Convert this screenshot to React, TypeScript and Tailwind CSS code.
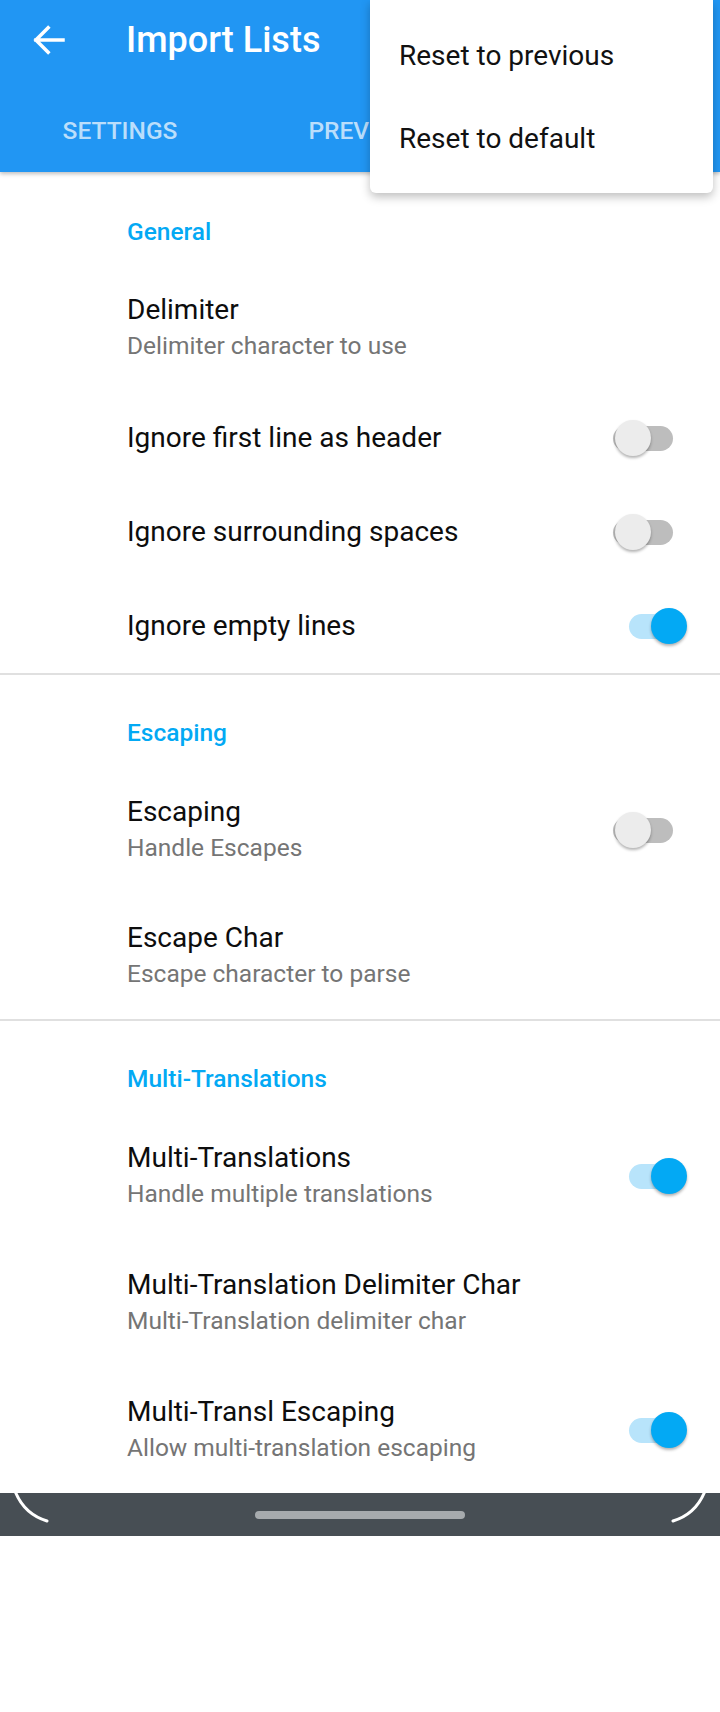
import React from 'react';

interface Pref {
  title: string;
  summary?: string;
  toggle?: boolean;
  checked?: boolean;
  height: string;
}

interface Section {
  name: string;
  first?: boolean;
  items: Pref[];
}

const sections: Section[] = [
  {
    name: 'General',
    first: true,
    items: [
      { title: 'Delimiter', summary: 'Delimiter character to use', height: 'h-[126px]' },
      { title: 'Ignore first line as header', toggle: true, checked: false, height: 'h-[94px]' },
      { title: 'Ignore surrounding spaces', toggle: true, checked: false, height: 'h-[94px]' },
      { title: 'Ignore empty lines', toggle: true, checked: true, height: 'h-[94px]' },
    ],
  },
  {
    name: 'Escaping',
    items: [
      { title: 'Escaping', summary: 'Handle Escapes', toggle: true, checked: false, height: 'h-[127px]' },
      { title: 'Escape Char', summary: 'Escape character to parse', height: 'h-[126px]' },
    ],
  },
  {
    name: 'Multi-Translations',
    items: [
      { title: 'Multi-Translations', summary: 'Handle multiple translations', toggle: true, checked: true, height: 'h-[127px]' },
      { title: 'Multi-Translation Delimiter Char', summary: 'Multi-Translation delimiter char', height: 'h-[127px]' },
      { title: 'Multi-Transl Escaping', summary: 'Allow multi-translation escaping', toggle: true, checked: true, height: 'h-[127px]' },
    ],
  },
];

const Switch: React.FC<{ checked?: boolean }> = ({ checked }) => (
  <div className="relative w-[73px] h-[36px] shrink-0">
    {checked ? (
      <>
        <div className="absolute left-[16px] top-[6px] w-[54px] h-[25px] rounded-full bg-[#B8E4FB]" />
        <div className="absolute left-[38px] top-0 w-[36px] h-[36px] rounded-full bg-[#03A9F4] shadow-[0_2px_3px_rgba(0,0,0,0.3)]" />
      </>
    ) : (
      <>
        <div className="absolute left-0 top-[6px] w-[60px] h-[25px] rounded-full bg-[#BDBDBD]" />
        <div className="absolute left-[2px] top-0 w-[36px] h-[36px] rounded-full bg-[#ECECEC] shadow-[0_2px_3px_rgba(0,0,0,0.3)]" />
      </>
    )}
  </div>
);

const App: React.FC = () => {
  return (
    <div className="relative w-[720px] h-[1712px] bg-white overflow-hidden font-['Roboto',sans-serif]">
      {/* App bar with tabs */}
      <div className="relative z-10 h-[172px] bg-[#2196F3] shadow-[0_2px_4px_rgba(0,0,0,0.25)]">
        <div className="flex items-center h-[79px]">
          <div className="w-[42px] h-[42px] ml-[28px] flex items-center justify-center">
            <svg width="42" height="42" viewBox="0 0 24 24" fill="none">
              <path d="M20 12H4.5M11.5 5L4.5 12L11.5 19" stroke="white" strokeWidth="2" strokeLinecap="square" />
            </svg>
          </div>
          <div className="ml-[56px] text-white text-[36px] font-medium leading-[42px]">Import Lists</div>
        </div>
        <div className="flex h-[93px]">
          {['SETTINGS', 'PREVIEW', ''].map((t, i) => (
            <div key={i} className="w-[240px] pt-[38px] text-center text-[24.5px] font-medium leading-[28px] text-[#BBDEFB]">
              {t}
            </div>
          ))}
        </div>
      </div>

      {/* Overflow menu */}
      <div className="absolute z-20 top-0 left-[370px] w-[343px] h-[193px] pt-[14px] bg-white rounded-b-[6px] shadow-[0_4px_10px_rgba(0,0,0,0.25)]">
        <div className="h-[83px] flex items-center px-[29px] text-[28px] leading-[36px] text-[#111111]">Reset to previous</div>
        <div className="h-[83px] flex items-center px-[29px] text-[28px] leading-[36px] text-[#111111]">Reset to default</div>
      </div>

      {/* Preferences */}
      <div className="flex flex-col">
        {sections.map((s, si) => (
          <div key={s.name}>
            {si > 0 && <div className="h-[2px] bg-[#E0E0E0]" />}
            <div className={`${s.first ? 'h-[93px] pt-[44px]' : 'h-[91px] pt-[42px]'} pl-[127px] text-[24.5px] leading-[32px] font-medium text-[#03A9F4]`}>
              {s.name}
            </div>
            {s.items.map((p) => (
              <div key={p.title} className={`${p.height} flex items-center pl-[127px] pr-[34px]`}>
                <div className="flex-1 flex flex-col">
                  <div className="text-[28px] leading-[36px] text-[#0d0d0d]">{p.title}</div>
                  {p.summary && <div className="text-[24.5px] leading-[36px] text-[#757575]">{p.summary}</div>}
                </div>
                {p.toggle && <Switch checked={p.checked} />}
              </div>
            ))}
          </div>
        ))}
      </div>

      {/* Navigation bar */}
      <div className="relative h-[43px] bg-[#474E54] flex items-center justify-center">
        <div className="w-[210px] h-[8px] rounded-full bg-[#A6AAAD]" />
        <svg className="absolute left-0 top-0" width="720" height="43" viewBox="0 0 720 43" fill="none">
          <path d="M15 -2 Q 24 21 47 28" stroke="white" strokeWidth="3" strokeLinecap="round" />
          <path d="M705 -2 Q 696 21 673 28" stroke="white" strokeWidth="3" strokeLinecap="round" />
        </svg>
      </div>
    </div>
  );
};

export default App;
